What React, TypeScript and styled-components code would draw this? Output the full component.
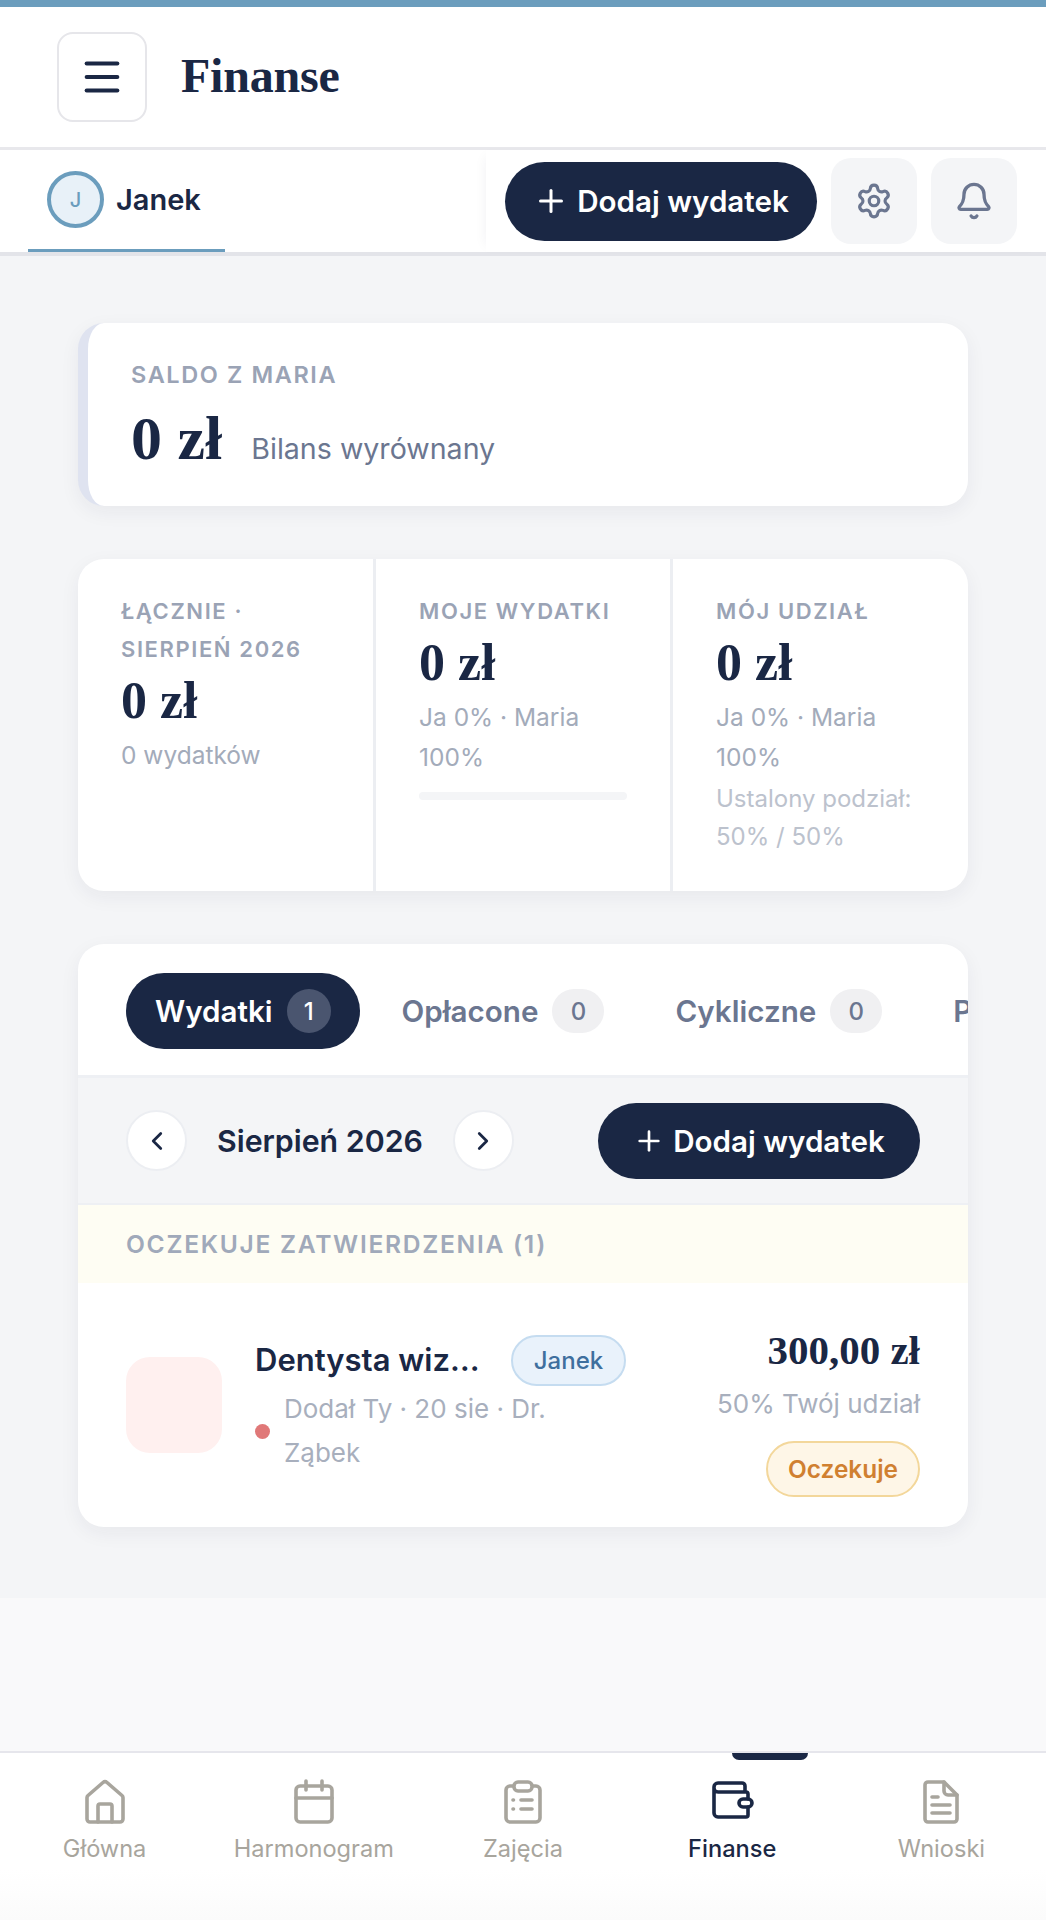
import styled, { createGlobalStyle } from "styled-components";
import { Bell, ChevronLeft, ChevronRight, Menu, Plus, Settings } from "lucide-react";

const NAVY = "#1a2744";
const BLUE = "#6b9dbd";
const SANS = `"Inter", "Noto Sans", sans-serif`;
const SERIF = `"Liberation Serif", serif`;

const GlobalStyle = createGlobalStyle`
  html, body {
    margin: 0;
    padding: 0;
    background: #fff;
  }
  * {
    box-sizing: border-box;
  }
`;

// page frame

const Page = styled.div`
  width: 1046px;
  height: 1920px;
  display: flex;
  flex-direction: column;
  overflow: hidden;
  font-family: ${SANS};
  color: ${NAVY};
  background: #fff;
  border-top: 7px solid ${BLUE};
`;

const Header = styled.header`
  height: 143px;
  flex-shrink: 0;
  display: flex;
  align-items: center;
  gap: 34px;
  padding: 0 57px;
  border-bottom: 3px solid #e8e8ec;
`;

const MenuButton = styled.button`
  width: 90px;
  height: 90px;
  padding: 0;
  display: flex;
  align-items: center;
  justify-content: center;
  background: #fff;
  color: ${NAVY};
  border: 2px solid #e6e6ea;
  border-radius: 16px;
`;

const PageTitle = styled.h1`
  margin: 0 0 4px;
  font-family: ${SERIF};
  font-size: 48px;
  font-weight: 700;
  letter-spacing: -0.2px;
  color: ${NAVY};
`;

const PersonBar = styled.div`
  height: 106px;
  flex-shrink: 0;
  display: flex;
  justify-content: space-between;
  border-bottom: 4px solid #e3e4e9;
`;

const PersonTab = styled.div`
  width: 197px;
  margin-left: 28px;
  padding: 0 0 0 19px;
  display: flex;
  align-items: center;
  gap: 12px;
  border-bottom: 3px solid ${BLUE};
  font-size: 29px;
  font-weight: 600;
`;

const Avatar = styled.div`
  width: 57px;
  height: 57px;
  display: flex;
  align-items: center;
  justify-content: center;
  border: 4px solid ${BLUE};
  border-radius: 50%;
  background: #e8f1f8;
  color: ${BLUE};
  font-size: 20px;
  font-weight: 500;
`;

const BarActions = styled.div`
  width: 560px;
  display: flex;
  align-items: center;
  gap: 14px;
  padding: 0 29px 0 19px;
  background: #fff;
  box-shadow: -7px 0 12px -7px rgba(26, 39, 68, 0.06);
`;

const PrimaryButton = styled.button<{ $width: number; $height: number }>`
  width: ${(p) => p.$width}px;
  height: ${(p) => p.$height}px;
  padding: 0;
  display: flex;
  align-items: center;
  justify-content: center;
  gap: 8px;
  flex-shrink: 0;
  background: ${NAVY};
  color: #fff;
  border: none;
  border-radius: 40px;
  font-family: ${SANS};
  font-size: 29.6px;
  font-weight: 600;
`;

const IconButton = styled.button`
  width: 86px;
  height: 86px;
  padding: 0;
  display: flex;
  align-items: center;
  justify-content: center;
  flex-shrink: 0;
  background: #f4f5f7;
  color: #6b7690;
  border: none;
  border-radius: 20px;
`;

// content

const Content = styled.main`
  flex-shrink: 0;
  display: flex;
  flex-direction: column;
  gap: 53px;
  padding: 67px 78px 71px;
  background: #f4f5f7;
`;

const Card = styled.section`
  background: #fff;
  border-radius: 26px;
  box-shadow: 0 6px 20px rgba(26, 39, 68, 0.06);
  overflow: hidden;
`;

const BalanceCard = styled(Card)`
  height: 183px;
  padding: 33px 44px 0 43px;
  border-left: 10px solid #dfe3f0;
`;

const Label = styled.div<{ $size?: number }>`
  font-size: ${(p) => p.$size ?? 22}px;
  line-height: 38px;
  font-weight: 600;
  letter-spacing: 1.6px;
  text-transform: uppercase;
  color: #9aa3b5;
`;

const BalanceLine = styled.div`
  display: flex;
  align-items: baseline;
  gap: 29px;
  margin-top: 6px;
`;

const BalanceValue = styled.div`
  font-family: ${SERIF};
  font-size: 62px;
  line-height: 76px;
  font-weight: 700;
`;

const BalanceNote = styled.div`
  font-size: 28.6px;
  color: #6b7690;
`;

const StatsCard = styled(Card)`
  display: grid;
  grid-template-columns: 295px 297px 298px;
`;

const StatColumn = styled.div`
  padding: 33px 43px 35px 43px;
  & + & {
    border-left: 3px solid #eceef2;
  }
`;

const StatValue = styled.div`
  font-family: ${SERIF};
  font-size: 52px;
  line-height: 65px;
  font-weight: 700;
`;

const StatNote = styled.div`
  margin-top: 2px;
  font-size: 24.5px;
  line-height: 40px;
  color: #a3abba;
`;

const StatHint = styled.div`
  margin-top: 3px;
  font-size: 24px;
  line-height: 38px;
  color: #bcc2cd;
`;

const ProgressTrack = styled.div`
  height: 8px;
  margin-top: 15px;
  border-radius: 4px;
  background: #f4f5f7;
`;

const TabRow = styled.div`
  display: flex;
  gap: 13px;
  padding: 29px 0 26px 48px;
  overflow: hidden;
  border-bottom: 3px solid #eef0f4;
`;

const Tab = styled.div<{ $active?: boolean }>`
  height: 76px;
  padding: 0 29px;
  display: flex;
  align-items: center;
  gap: 14px;
  flex-shrink: 0;
  border-radius: 38px;
  background: ${(p) => (p.$active ? NAVY : "transparent")};
  color: ${(p) => (p.$active ? "#fff" : "#6b7690")};
  font-size: 29.6px;
  font-weight: 600;
`;

const TabCount = styled.span<{ $active?: boolean }>`
  min-width: ${(p) => (p.$active ? 44 : 52)}px;
  height: 44px;
  display: flex;
  align-items: center;
  justify-content: center;
  border-radius: 22px;
  background: ${(p) => (p.$active ? "#4a556f" : "#f0f0f2")};
  font-size: 24px;
  font-weight: 500;
`;

const FilterRow = styled.div`
  height: 127px;
  padding: 0 48px;
  display: flex;
  align-items: center;
  justify-content: space-between;
  background: #f4f5f7;
  border-bottom: 2px solid #eef0f4;
`;

const MonthPicker = styled.div`
  display: flex;
  align-items: center;
  gap: 30px;
  font-size: 30.3px;
  font-weight: 600;
`;

const RoundButton = styled.button`
  width: 61px;
  height: 61px;
  padding: 0;
  display: flex;
  align-items: center;
  justify-content: center;
  background: #fff;
  color: ${NAVY};
  border: 2px solid #eceef2;
  border-radius: 50%;
`;

const PendingHeader = styled.div`
  height: 78px;
  padding: 0 48px;
  display: flex;
  align-items: center;
  background: #fefdf3;
  font-size: 24.6px;
  font-weight: 600;
  letter-spacing: 1.7px;
  text-transform: uppercase;
  color: #a0a9ba;
`;

const ExpenseRow = styled.div`
  height: 244px;
  padding: 0 48px;
  display: flex;
  align-items: center;
`;

const ExpenseIcon = styled.div`
  width: 96px;
  height: 96px;
  flex-shrink: 0;
  border-radius: 24px;
  background: #fff0ef;
`;

const ExpenseMain = styled.div`
  width: 400px;
  margin-left: 33px;
  flex-shrink: 0;
`;

const TitleLine = styled.div`
  display: flex;
  align-items: center;
  gap: 28px;
`;

const ExpenseTitle = styled.div`
  width: 228px;
  padding-bottom: 2px;
  overflow: hidden;
  white-space: nowrap;
  text-overflow: ellipsis;
  font-size: 31px;
  font-weight: 600;
`;

const PersonBadge = styled.span`
  height: 51px;
  width: 115px;
  display: flex;
  align-items: center;
  justify-content: center;
  border: 2px solid #c5dcf0;
  border-radius: 26px;
  background: #e9f2fb;
  color: #3e6f9e;
  font-size: 24px;
  font-weight: 500;
`;

const MetaLine = styled.div`
  display: flex;
  align-items: center;
  gap: 14px;
  margin-top: 1px;
`;

const Dot = styled.span`
  width: 15px;
  height: 15px;
  flex-shrink: 0;
  border-radius: 50%;
  background: #e07878;
`;

const MetaText = styled.div`
  width: 330px;
  font-size: 26px;
  line-height: 44px;
  color: #a8afbd;
`;

const ExpenseSide = styled.div`
  margin-left: auto;
  padding-top: 12px;
  display: flex;
  flex-direction: column;
  align-items: flex-end;
`;

const Amount = styled.div`
  font-family: ${SERIF};
  font-size: 41px;
  line-height: 50px;
  font-weight: 700;
`;

const ShareNote = styled.div`
  margin-top: 7px;
  font-size: 26px;
  line-height: 44px;
  color: #a8afbd;
`;

const StatusBadge = styled.span`
  width: 154px;
  height: 56px;
  margin-top: 15px;
  display: flex;
  align-items: center;
  justify-content: center;
  border: 2px solid #f3d79b;
  border-radius: 28px;
  background: #fef6e7;
  color: #d08030;
  font-size: 24.4px;
  font-weight: 600;
`;

const Filler = styled.div`
  flex: 1;
  background: #f9f9fa;
`;

// bottom nav

const BottomNav = styled.nav`
  height: 169px;
  flex-shrink: 0;
  position: relative;
  display: grid;
  grid-template-columns: repeat(5, 1fr);
  padding-top: 26px;
  border-top: 2px solid #e6e6ec;
  background: linear-gradient(#fff 70%, #fbfbfb);
`;

const NavIndicator = styled.div`
  position: absolute;
  top: 0;
  left: 732px;
  width: 76px;
  height: 7px;
  border-radius: 0 0 7px 7px;
  background: ${NAVY};
`;

const NavItem = styled.div<{ $active?: boolean }>`
  display: flex;
  flex-direction: column;
  align-items: center;
  gap: 9px;
  font-size: 23.6px;
  font-weight: ${(p) => (p.$active ? 500 : 400)};
  color: ${(p) => (p.$active ? NAVY : "#a8a59d")};
`;

const NavIcon = styled.svg.attrs({
  width: 44,
  height: 46,
  viewBox: "0 0 44 46",
  fill: "none",
  stroke: "currentColor",
  strokeWidth: 3.6,
  strokeLinecap: "round",
  strokeLinejoin: "round",
})``;

const HomeIcon = () => (
  <NavIcon>
    <path d="M4 19a3 3 0 0 1 1-2.5L20 3.5a3 3 0 0 1 4 0l15 13a3 3 0 0 1 1 2.5v21a3 3 0 0 1-3 3H7a3 3 0 0 1-3-3Z" />
    <path d="M15 43V27a2 2 0 0 1 2-2h10a2 2 0 0 1 2 2v16" />
  </NavIcon>
);

const CalendarIcon = () => (
  <NavIcon>
    <rect x="4" y="7" width="36" height="36" rx="4" />
    <path d="M4 19h36M14 2v9M30 2v9" />
  </NavIcon>
);

const ClipboardIcon = () => (
  <NavIcon>
    <path d="M12 7H9a4 4 0 0 0-4 4v28a4 4 0 0 0 4 4h26a4 4 0 0 0 4-4V11a4 4 0 0 0-4-4h-3" />
    <rect x="13" y="3" width="18" height="9" rx="4" />
    <path d="M12 21h.5M20 21h11M12 30h.5M20 30h11" />
  </NavIcon>
);

const WalletIcon = () => (
  <NavIcon>
    <path d="M8 13h28a2 2 0 0 1 2 2v5M38 28v8a2 2 0 0 1-2 2H8a4 4 0 0 1-4-4V8a4 4 0 0 1 4-4h24a3 3 0 0 1 3 3v6M4 9a4 4 0 0 0 4 4" />
    <rect x="29" y="20" width="13" height="8" rx="4" />
  </NavIcon>
);

const FileIcon = () => (
  <NavIcon>
    <path d="M6 6a3 3 0 0 1 3-3h16l13 13v24a3 3 0 0 1-3 3H9a3 3 0 0 1-3-3Z" />
    <path d="M25 3v9a4 4 0 0 0 4 4h9M13 18h6M13 26h18M13 34h18" />
  </NavIcon>
);

const navItems = [
  { label: "Główna", icon: <HomeIcon /> },
  { label: "Harmonogram", icon: <CalendarIcon /> },
  { label: "Zajęcia", icon: <ClipboardIcon /> },
  { label: "Finanse", icon: <WalletIcon />, active: true },
  { label: "Wnioski", icon: <FileIcon /> },
];

const tabs = [
  { label: "Wydatki", count: 1, active: true },
  { label: "Opłacone", count: 0 },
  { label: "Cykliczne", count: 0 },
  { label: "Podsumowanie", count: 0 },
];

export default function App() {
  return (
    <Page>
      <GlobalStyle />
      <Header>
        <MenuButton>
          <Menu size={46} strokeWidth={2.1} />
        </MenuButton>
        <PageTitle>Finanse</PageTitle>
      </Header>

      <PersonBar>
        <PersonTab>
          <Avatar>J</Avatar>
          Janek
        </PersonTab>
        <BarActions>
          <PrimaryButton $width={312} $height={79}>
            <Plus size={36} strokeWidth={2} />
            Dodaj wydatek
          </PrimaryButton>
          <IconButton>
            <Settings size={38} strokeWidth={2} />
          </IconButton>
          <IconButton>
            <Bell size={40} strokeWidth={2} />
          </IconButton>
        </BarActions>
      </PersonBar>

      <Content>
        <BalanceCard>
          <Label $size={23.5}>Saldo z Maria</Label>
          <BalanceLine>
            <BalanceValue>0 zł</BalanceValue>
            <BalanceNote>Bilans wyrównany</BalanceNote>
          </BalanceLine>
        </BalanceCard>

        <StatsCard>
          <StatColumn>
            <Label>Łącznie · Sierpień 2026</Label>
            <StatValue>0 zł</StatValue>
            <StatNote>0 wydatków</StatNote>
          </StatColumn>
          <StatColumn>
            <Label>Moje wydatki</Label>
            <StatValue>0 zł</StatValue>
            <StatNote>Ja 0% · Maria 100%</StatNote>
            <ProgressTrack />
          </StatColumn>
          <StatColumn>
            <Label>Mój udział</Label>
            <StatValue>0 zł</StatValue>
            <StatNote>Ja 0% · Maria 100%</StatNote>
            <StatHint>Ustalony podział: 50% / 50%</StatHint>
          </StatColumn>
        </StatsCard>

        <Card>
          <TabRow>
            {tabs.map((tab) => (
              <Tab key={tab.label} $active={tab.active}>
                {tab.label}
                <TabCount $active={tab.active}>{tab.count}</TabCount>
              </Tab>
            ))}
          </TabRow>
          <FilterRow>
            <MonthPicker>
              <RoundButton>
                <ChevronLeft size={30} strokeWidth={2.2} />
              </RoundButton>
              Sierpień 2026
              <RoundButton>
                <ChevronRight size={30} strokeWidth={2.2} />
              </RoundButton>
            </MonthPicker>
            <PrimaryButton $width={322} $height={76}>
              <Plus size={32} strokeWidth={2} />
              Dodaj wydatek
            </PrimaryButton>
          </FilterRow>
          <PendingHeader>Oczekuje zatwierdzenia (1)</PendingHeader>
          <ExpenseRow>
            <ExpenseIcon />
            <ExpenseMain>
              <TitleLine>
                <ExpenseTitle>Dentysta wizyta kontrolna</ExpenseTitle>
                <PersonBadge>Janek</PersonBadge>
              </TitleLine>
              <MetaLine>
                <Dot />
                <MetaText>Dodał Ty · 20 sie · Dr. Ząbek</MetaText>
              </MetaLine>
            </ExpenseMain>
            <ExpenseSide>
              <Amount>300,00 zł</Amount>
              <ShareNote>50% Twój udział</ShareNote>
              <StatusBadge>Oczekuje</StatusBadge>
            </ExpenseSide>
          </ExpenseRow>
        </Card>
      </Content>

      <Filler />

      <BottomNav>
        <NavIndicator />
        {navItems.map((item) => (
          <NavItem key={item.label} $active={item.active}>
            {item.icon}
            {item.label}
          </NavItem>
        ))}
      </BottomNav>
    </Page>
  );
}
